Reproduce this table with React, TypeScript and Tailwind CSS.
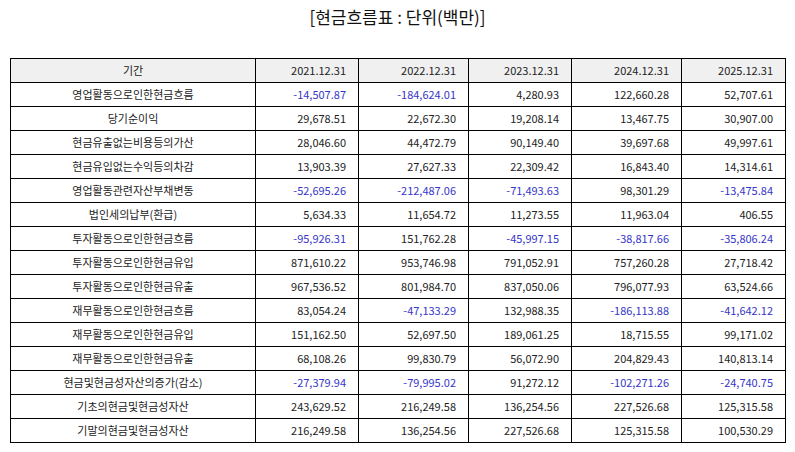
const years = ['2021.12.31', '2022.12.31', '2023.12.31', '2024.12.31', '2025.12.31'];

const rows: [string, string[]][] = [
  ['영업활동으로인한현금흐름', ['-14,507.87', '-184,624.01', '4,280.93', '122,660.28', '52,707.61']],
  ['당기순이익', ['29,678.51', '22,672.30', '19,208.14', '13,467.75', '30,907.00']],
  ['현금유출없는비용등의가산', ['28,046.60', '44,472.79', '90,149.40', '39,697.68', '49,997.61']],
  ['현금유입없는수익등의차감', ['13,903.39', '27,627.33', '22,309.42', '16,843.40', '14,314.61']],
  ['영업활동관련자산부채변동', ['-52,695.26', '-212,487.06', '-71,493.63', '98,301.29', '-13,475.84']],
  ['법인세의납부(환급)', ['5,634.33', '11,654.72', '11,273.55', '11,963.04', '406.55']],
  ['투자활동으로인한현금흐름', ['-95,926.31', '151,762.28', '-45,997.15', '-38,817.66', '-35,806.24']],
  ['투자활동으로인한현금유입', ['871,610.22', '953,746.98', '791,052.91', '757,260.28', '27,718.42']],
  ['투자활동으로인한현금유출', ['967,536.52', '801,984.70', '837,050.06', '796,077.93', '63,524.66']],
  ['재무활동으로인한현금흐름', ['83,054.24', '-47,133.29', '132,988.35', '-186,113.88', '-41,642.12']],
  ['재무활동으로인한현금유입', ['151,162.50', '52,697.50', '189,061.25', '18,715.55', '99,171.02']],
  ['재무활동으로인한현금유출', ['68,108.26', '99,830.79', '56,072.90', '204,829.43', '140,813.14']],
  ['현금및현금성자산의증가(감소)', ['-27,379.94', '-79,995.02', '91,272.12', '-102,271.26', '-24,740.75']],
  ['기초의현금및현금성자산', ['243,629.52', '216,249.58', '136,254.56', '227,526.68', '125,315.58']],
  ['기말의현금및현금성자산', ['216,249.58', '136,254.56', '227,526.68', '125,315.58', '100,530.29']],
];

// column widths include each cell's right border
const widths = ['w-[245px]', 'w-[103px]', 'w-[110px]', 'w-[103px]', 'w-[110px]', 'w-[104px]'];

const cell = 'h-[24px] p-0 border-r border-b border-[#000]';

export default function App() {
  return (
    <div className="w-[795px] h-[452px] bg-white font-['Noto_Sans_CJK_KR','Noto_Sans',sans-serif] text-[#222]">
      <h1 className="pt-[5px] h-[58px] text-center text-[17px] leading-[24px] text-[#111]">[현금흐름표 : 단위(백만)]</h1>
      <table className="ml-[10px] w-[776px] border-separate border-spacing-0 table-fixed border-l border-t border-[#000] text-[11px]">
        <colgroup>
          {widths.map((w, i) => (
            <col key={i} className={w} />
          ))}
        </colgroup>
        <thead>
          <tr className="bg-[#f0f0f0]">
            <th className={`${cell} font-normal text-center`}>기간</th>
            {years.map((y) => (
              <th key={y} className={`${cell} pr-3 font-normal text-right`}>
                {y}
              </th>
            ))}
          </tr>
        </thead>
        <tbody>
          {rows.map(([label, vals]) => (
            <tr key={label}>
              <td className={`${cell} text-center`}>{label}</td>
              {vals.map((v, i) => (
                <td
                  key={i}
                  className={`${cell} pr-3 text-right ${v.startsWith('-') ? 'text-[#3535c8]' : ''}`}
                >
                  {v}
                </td>
              ))}
            </tr>
          ))}
        </tbody>
      </table>
    </div>
  );
}
